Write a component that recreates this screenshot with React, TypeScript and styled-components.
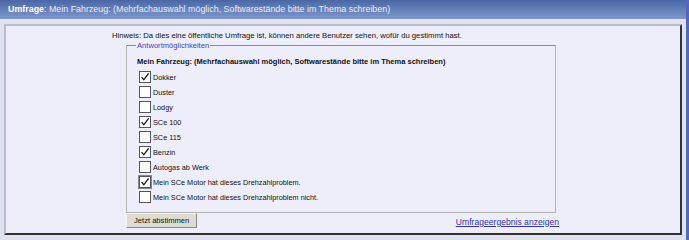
import React from 'react'
import styled, { createGlobalStyle } from 'styled-components'

const GlobalStyle = createGlobalStyle`
body {
  margin: 0;
  background: #dfe2ee;
  font-family: "Liberation Sans", Arial, sans-serif;
}
`;

const Page = styled.div`
width: 686px;
height: 240px;
border-right: 3px solid #5566bb;
background: #dfe2ee;
`;

const Header = styled.div`
height: 19px;
line-height: 19px;
padding-left: 8px;
font-size: 8.9px;
color: #e8eefa;
background: linear-gradient(#4a67a6, #7f98cb);
white-space: nowrap;
& > b { color: #ffffff; }
`;

const Panel = styled.div`
margin: 5px 4px 0 4px;
height: 207px;
background: #eeeefa;
border-top: 2px solid #b8bccb;
border-left: 2px solid #b8bccb;
border-right: 2px solid #333333;
border-bottom: 2px solid #333333;
display: flex;
justify-content: center;
`;

const Content = styled.div`
width: 462px;
padding-top: 5px;
font-size: 7.7px;
color: #111111;
`;

const Note = styled.div`
height: 10px;
line-height: 10px;
`;

const Fieldset = styled.fieldset`
margin: 0 0 0 14px;
width: 430px;
padding: 2px 0 9px 10px;
border: 1px solid #b5b5b5;
border-top-color: #8c8c8c;
box-sizing: border-box;
`;

const Legend = styled.legend`
color: #4444bb;
padding: 0 1px;
margin-left: -1px;
font-size: 7.6px;
`;

const Question = styled.div`
font-weight: bold;
font-size: 7.5px;
height: 13px;
line-height: 13px;
margin-top: 3px;
`;

const Option = styled.label`
display: flex;
align-items: flex-end;
height: 15px;
padding-left: 2px;
font-size: 7.3px;
`;

const Box = styled.span<{ $focused?: boolean }>`
width: 12px;
height: 12px;
box-sizing: border-box;
border: 1px solid #555555;
background: #ffffff;
margin-right: 2px;
display: flex;
align-items: center;
justify-content: center;
outline: ${p => (p.$focused ? '1px solid #888' : 'none')};
outline-offset: 0;
`;

const OptionText = styled.span`
line-height: 10px;
`;

const Footer = styled.div`
display: flex;
justify-content: space-between;
align-items: center;
margin: 0 15px 0 14px;
`;

const Button = styled.button`
font-family: "Liberation Sans", Arial, sans-serif;
font-size: 7.6px;
height: 15px;
padding: 0 7px;
background: #dedbd3;
color: #111111;
border: 1px solid #f4f4f4;
border-right-color: #888888;
border-bottom-color: #888888;
`;

const ResultLink = styled.a`
color: #3333aa;
text-decoration: underline;
font-size: 8.6px;
margin-top: 2px;
`;

const Check = () => (
  <svg width="10" height="10" viewBox="0 0 10 10">
    <path d="M1.6 5.2 L3.8 7.8 L8.6 1.4" fill="none" stroke="#111" strokeWidth="1.3" />
  </svg>
);

const options = [
  { label: 'Dokker', checked: true },
  { label: 'Duster', checked: false },
  { label: 'Lodgy', checked: false },
  { label: 'SCe 100', checked: true },
  { label: 'SCe 115', checked: false },
  { label: 'Benzin', checked: true },
  { label: 'Autogas ab Werk', checked: false },
  { label: 'Mein SCe Motor hat dieses Drehzahlproblem.', checked: true, focused: true },
  { label: 'Mein SCe Motor hat dieses Drehzahlproblem nicht.', checked: false },
];

export default function App() {
  return (
    <>
      <GlobalStyle />
      <Page>
        <Header>
          <b>Umfrage</b>: Mein Fahrzeug: (Mehrfachauswahl möglich, Softwarestände bitte im Thema schreiben)
        </Header>
        <Panel>
          <Content>
            <Note>Hinweis: Da dies eine öffentliche Umfrage ist, können andere Benutzer sehen, wofür du gestimmt hast.</Note>
            <Fieldset>
              <Legend>Antwortmöglichkeiten</Legend>
              <Question>Mein Fahrzeug: (Mehrfachauswahl möglich, Softwarestände bitte im Thema schreiben)</Question>
              {options.map(o => (
                <Option key={o.label}>
                  <Box $focused={o.focused}>{o.checked && <Check />}</Box>
                  <OptionText>{o.label}</OptionText>
                </Option>
              ))}
            </Fieldset>
            <Footer>
              <Button>Jetzt abstimmen</Button>
              <ResultLink href="#">Umfrageergebnis anzeigen</ResultLink>
            </Footer>
          </Content>
        </Panel>
      </Page>
    </>
  )
}
